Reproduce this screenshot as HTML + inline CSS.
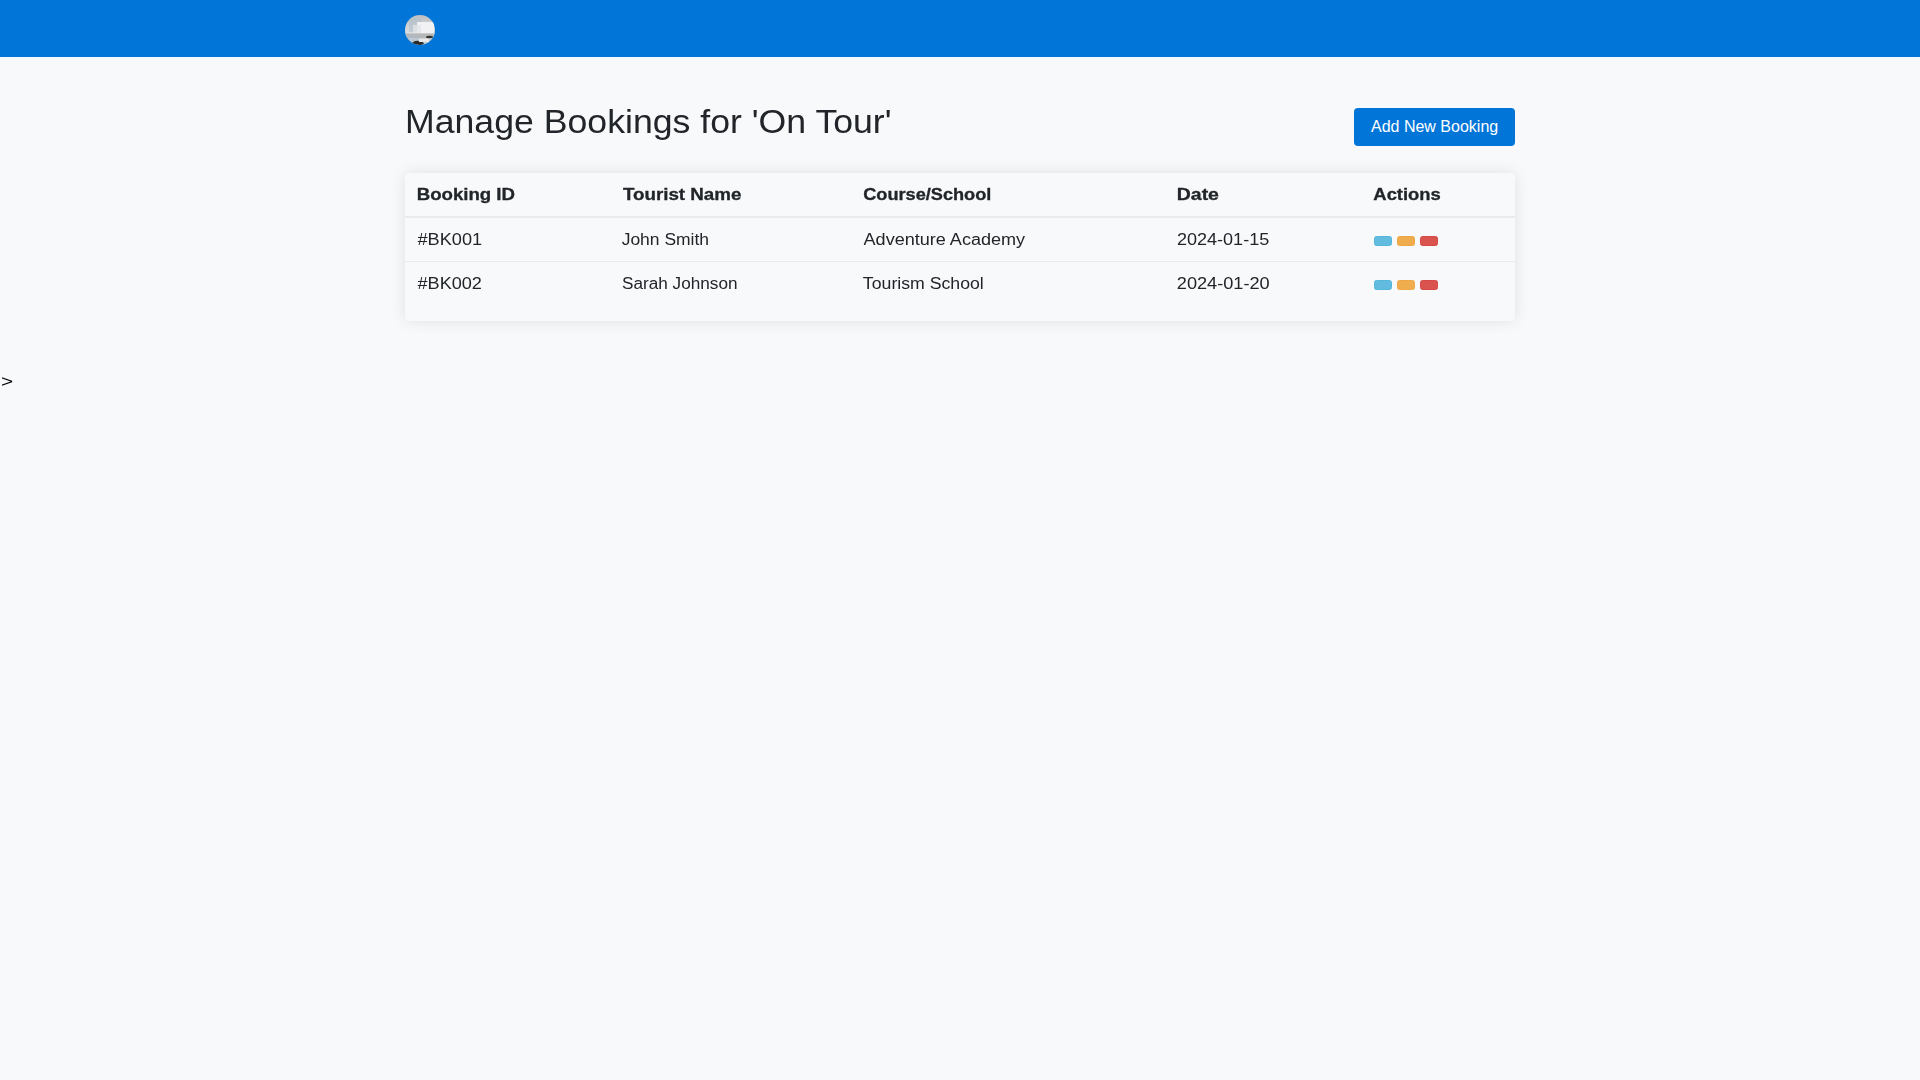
<!DOCTYPE html>
<html>
<head>
<meta charset="utf-8">
<title>Manage Bookings</title>
<style>
html,body{margin:0;padding:0;}
body{width:1920px;height:1080px;background:#f8f9fa;color:#212529;font-family:"Liberation Sans",sans-serif;position:relative;overflow:hidden;}
.nav{position:absolute;left:0;top:0;width:1920px;height:57px;background:#0275d8;}
.logo{position:absolute;left:405px;top:15px;width:30px;height:30px;}
.t{position:absolute;white-space:nowrap;line-height:16px;font-size:16px;transform-origin:0 0;will-change:transform;}
.tt{font-size:32.5px;line-height:32px;}

.btn{position:absolute;left:1354px;top:108px;width:161px;height:38px;background:#0275d8;border-radius:4px;color:#fff;}

.card{position:absolute;left:405px;top:173px;width:1110px;height:148px;border-radius:4px;box-shadow:0 0 15px rgba(0,0,0,0.1);background:#f8f9fa;}
.hb{position:absolute;left:405px;width:1110px;height:2px;top:216px;background:#e9ecef;}
.rb{position:absolute;left:405px;width:1110px;height:1px;top:261px;background:#e9ecef;}
.b{font-weight:bold;-webkit-text-stroke:0.3px #212529;}
.p{position:absolute;width:18px;height:10px;border-radius:2.5px;box-sizing:border-box;border:1px solid;}
.i{background:#62bcdf;border-color:#55b6dd}.w{background:#f0ad4e;border-color:#efa845}.d{background:#d9534f;border-color:#d74a46}
.bt{position:absolute;white-space:nowrap;line-height:16px;font-size:16px;color:#fff;}
.gt{position:absolute;left:0.9px;top:374px;font-size:16px;line-height:16px;color:#000;transform:scaleX(1.3);transform-origin:0 0;will-change:transform;}
</style>
</head>
<body>
<div class="nav"><svg class="logo" width="30" height="30" viewBox="0 0 30 30"><defs><filter id="f" x="-10%" y="-10%" width="120%" height="120%"><feGaussianBlur stdDeviation="0.5"/></filter><clipPath id="c"><circle cx="15" cy="15" r="15"/></clipPath>
<linearGradient id="g1" x1="0" y1="0" x2="0" y2="1"><stop offset="0" stop-color="#bdbfc2"/><stop offset="0.35" stop-color="#cfd1d3"/><stop offset="0.6" stop-color="#dcdddf"/><stop offset="1" stop-color="#c9cacc"/></linearGradient></defs>
<g clip-path="url(#c)">
<rect width="30" height="30" fill="url(#g1)"/>
<g filter="url(#f)">
<rect x="4" y="3" width="12" height="14" fill="#aebfcc" opacity="0.55"/>
<rect x="12" y="7" width="17" height="11" fill="#f1f1f3"/>
<rect x="8" y="10" width="8" height="8" fill="#e4e5e7" opacity="0.8"/>
<rect x="0" y="18.5" width="30" height="4.5" fill="#b6b7b9"/>
<rect x="2" y="20" width="12" height="8" fill="#a9bccb" opacity="0.5"/>
<ellipse cx="24.5" cy="22" rx="3.5" ry="1.2" fill="#333"/>
<path d="M7 28 Q10 25 14 26 Q18 26.5 19 28.5 L17 30 L9 30 Z" fill="#2a2a2a"/>
<rect x="14" y="24" width="10" height="3" fill="#e8e8e8"/>
</g></g></svg></div>
<div class="btn"></div>
<div class="bt" style="left:1371px;top:119px;">Add New Booking</div>
<div class="card"></div>
<div class="hb"></div>
<div class="rb"></div>

<div class="t tt" style="left:0;top:106px;transform:translateX(404.97px) scaleX(1.0969)">Manage Bookings for 'On Tour'</div>
<div class="t b" style="left:0;top:187px;font-size:16.0px;transform:translateX(416.68px) scaleX(1.1641)">Booking ID</div>
<div class="t b" style="left:0;top:187px;font-size:16.0px;transform:translateX(622.98px) scaleX(1.1716)">Tourist Name</div>
<div class="t b" style="left:0;top:187px;font-size:16.0px;transform:translateX(863.17px) scaleX(1.1352)">Course/School</div>
<div class="t b" style="left:0;top:187px;font-size:16.0px;transform:translateX(1176.79px) scaleX(1.2152)">Date</div>
<div class="t b" style="left:0;top:187px;font-size:16.0px;transform:translateX(1373.36px) scaleX(1.1496)">Actions</div>
<div class="t " style="left:0;top:232px;font-size:16.0px;transform:translateX(417.52px) scaleX(1.1338)">#BK001</div>
<div class="t " style="left:0;top:232px;font-size:16.0px;transform:translateX(621.67px) scaleX(1.0919)">John Smith</div>
<div class="t " style="left:0;top:232px;font-size:16.0px;transform:translateX(863.58px) scaleX(1.1280)">Adventure Academy</div>
<div class="t " style="left:0;top:232px;font-size:16.0px;transform:translateX(1176.95px) scaleX(1.1271)">2024-01-15</div>
<div class="t " style="left:0;top:276px;font-size:16.0px;transform:translateX(417.52px) scaleX(1.1309)">#BK002</div>
<div class="t " style="left:0;top:276px;font-size:16.0px;transform:translateX(622.03px) scaleX(1.0728)">Sarah Johnson</div>
<div class="t " style="left:0;top:276px;font-size:16.0px;transform:translateX(862.87px) scaleX(1.1054)">Tourism School</div>
<div class="t " style="left:0;top:276px;font-size:16.0px;transform:translateX(1176.78px) scaleX(1.1346)">2024-01-20</div>

<div class="p i" style="left:1374px;top:236px"></div>
<div class="p w" style="left:1397px;top:236px"></div>
<div class="p d" style="left:1420px;top:236px"></div>

<div class="p i" style="left:1374px;top:280px"></div>
<div class="p w" style="left:1397px;top:280px"></div>
<div class="p d" style="left:1420px;top:280px"></div>

<div class="gt">&gt;</div>
</body>
</html>
